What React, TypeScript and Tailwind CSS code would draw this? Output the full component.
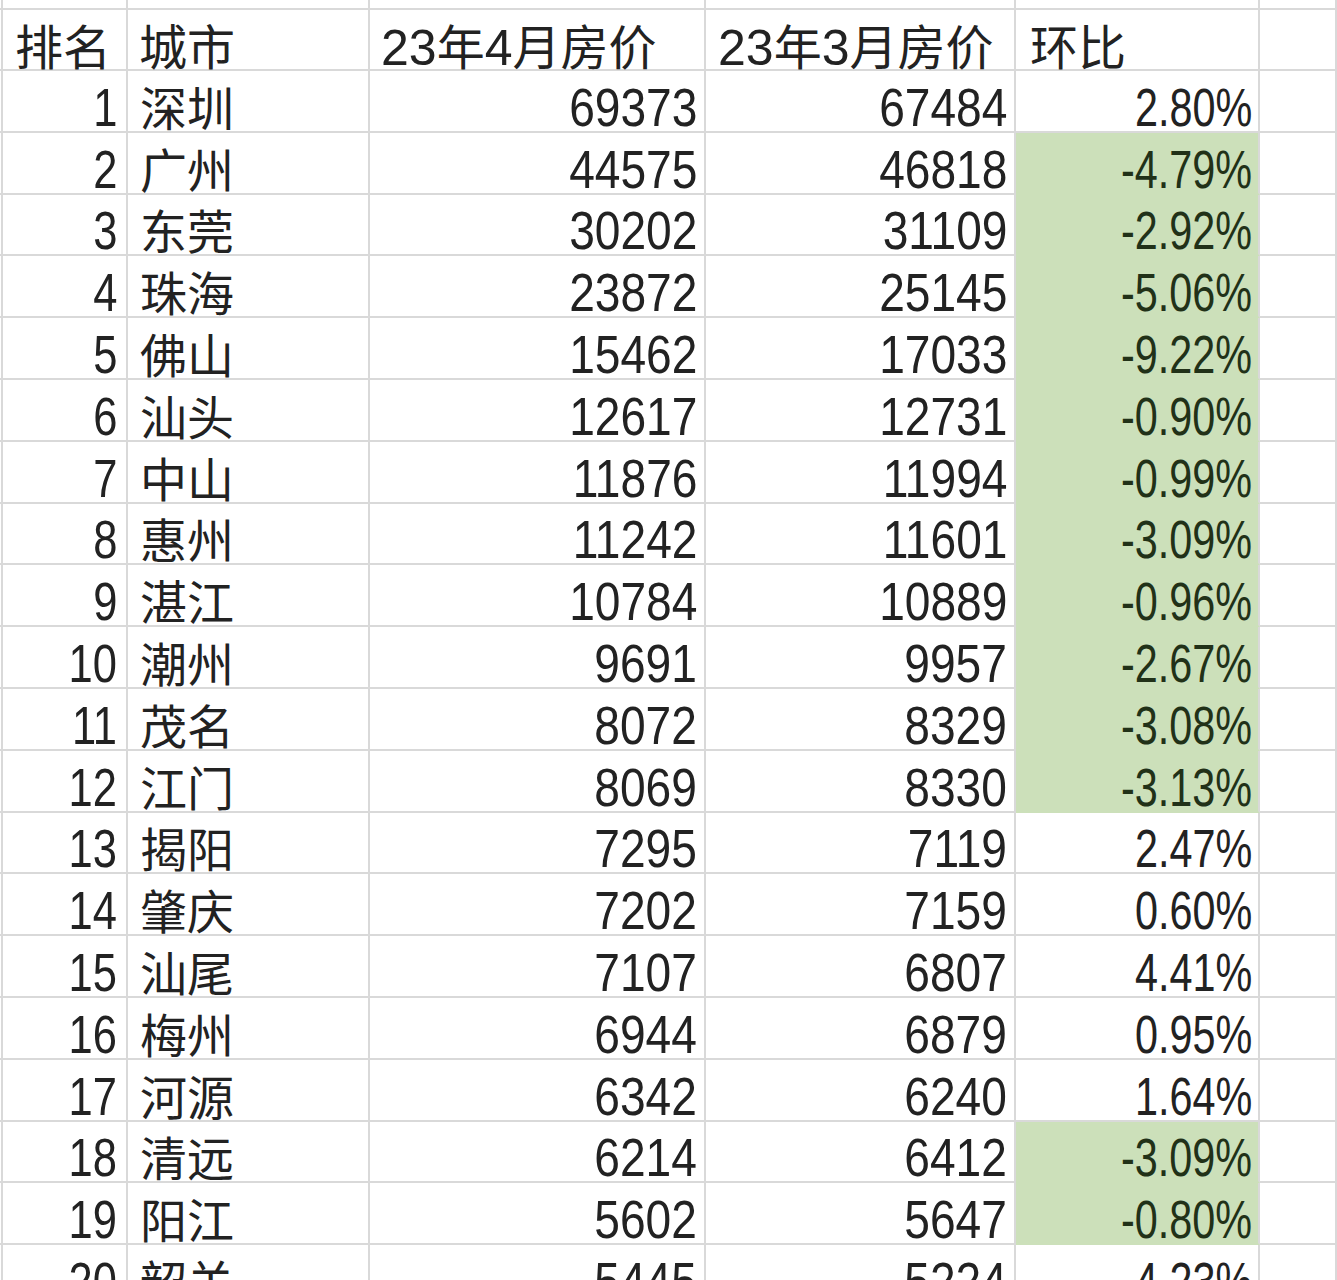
const rows: [number, string, string, string, string, boolean][] = [
  [1, "深圳", "69373", "67484", "2.80%", false],
  [2, "广州", "44575", "46818", "-4.79%", true],
  [3, "东莞", "30202", "31109", "-2.92%", true],
  [4, "珠海", "23872", "25145", "-5.06%", true],
  [5, "佛山", "15462", "17033", "-9.22%", true],
  [6, "汕头", "12617", "12731", "-0.90%", true],
  [7, "中山", "11876", "11994", "-0.99%", true],
  [8, "惠州", "11242", "11601", "-3.09%", true],
  [9, "湛江", "10784", "10889", "-0.96%", true],
  [10, "潮州", "9691", "9957", "-2.67%", true],
  [11, "茂名", "8072", "8329", "-3.08%", true],
  [12, "江门", "8069", "8330", "-3.13%", true],
  [13, "揭阳", "7295", "7119", "2.47%", false],
  [14, "肇庆", "7202", "7159", "0.60%", false],
  [15, "汕尾", "7107", "6807", "4.41%", false],
  [16, "梅州", "6944", "6879", "0.95%", false],
  [17, "河源", "6342", "6240", "1.64%", false],
  [18, "清远", "6214", "6412", "-3.09%", true],
  [19, "阳江", "5602", "5647", "-0.80%", true],
  [20, "韶关", "5445", "5224", "4.23%", false],
]

const cols = "grid grid-cols-[3px_125px_242px_336px_310px_244px_1fr]"
const cell = "border-r-2 border-b-2 border-[#d9d9d9] box-border"
const num = "font-['Liberation_Sans',sans-serif] text-[53px] leading-[40px] inline-block origin-right"
const headNum = "font-['Liberation_Sans',sans-serif] text-[50px] leading-[40px] inline-block"
const cjk = "font-['Noto_Sans_CJK_SC',sans-serif] leading-[48px]"

function Cjk({ children, size = "text-[47px]" }: { children: string; size?: string }) {
  return <span className={`${cjk} ${size}`}>{children}</span>
}

export default function App() {
  return (
    <div className="w-[1337px] h-[1280px] overflow-hidden bg-white text-[#222222]">
      {/* partial row above header */}
      <div className={`${cols} h-[10px]`}>
        {[0, 1, 2, 3, 4, 5, 6].map((i) => (
          <div key={i} className={cell} />
        ))}
      </div>

      {/* header */}
      <div className={`${cols} h-[61px]`}>
        <div className={cell} />
        <div className={`${cell} flex items-end pl-[12px] pb-[1px]`}>
          <Cjk size="text-[48px]">排名</Cjk>
        </div>
        <div className={`${cell} flex items-end pl-[11px] pb-[1px]`}>
          <Cjk size="text-[48px]">城市</Cjk>
        </div>
        <div className={`${cell} flex items-end pl-[11px] pb-[1px]`}>
          <span className={headNum}>23</span>
          <Cjk size="text-[48px]">年</Cjk>
          <span className={headNum}>4</span>
          <Cjk size="text-[48px]">月房价</Cjk>
        </div>
        <div className={`${cell} flex items-end pl-[12px] pb-[1px]`}>
          <span className={headNum}>23</span>
          <Cjk size="text-[48px]">年</Cjk>
          <span className={headNum}>3</span>
          <Cjk size="text-[48px]">月房价</Cjk>
        </div>
        <div className={`${cell} flex items-end pl-[14px] pb-[1px]`}>
          <Cjk size="text-[48px]">环比</Cjk>
        </div>
        <div className={cell} />
      </div>

      {rows.map(([rank, city, apr, mar, ratio, down]) => (
        <div key={rank} className={`${cols} h-[61.8px]`}>
          <div className={cell} />
          <div className={`${cell} flex items-end justify-end pr-[9px] pb-[3px]`}>
            <span className={`${num} scale-x-[0.82]`}>{rank}</span>
          </div>
          <div className={`${cell} flex items-end pl-[12px] pb-[1px]`}>
            <Cjk>{city}</Cjk>
          </div>
          <div className={`${cell} flex items-end justify-end pr-[7px] pb-[3px]`}>
            <span className={`${num} scale-x-[0.87]`}>{apr}</span>
          </div>
          <div className={`${cell} flex items-end justify-end pr-[7px] pb-[3px]`}>
            <span className={`${num} scale-x-[0.87]`}>{mar}</span>
          </div>
          <div
            className={`${cell} flex items-end justify-end pr-[6px] pb-[3px] ${
              down ? "bg-[#cce0ba] border-b-[#cce0ba] text-[#213118]" : ""
            }`}
          >
            <span className={`${num} scale-x-[0.78]`}>{ratio}</span>
          </div>
          <div className={cell} />
        </div>
      ))}
    </div>
  )
}
